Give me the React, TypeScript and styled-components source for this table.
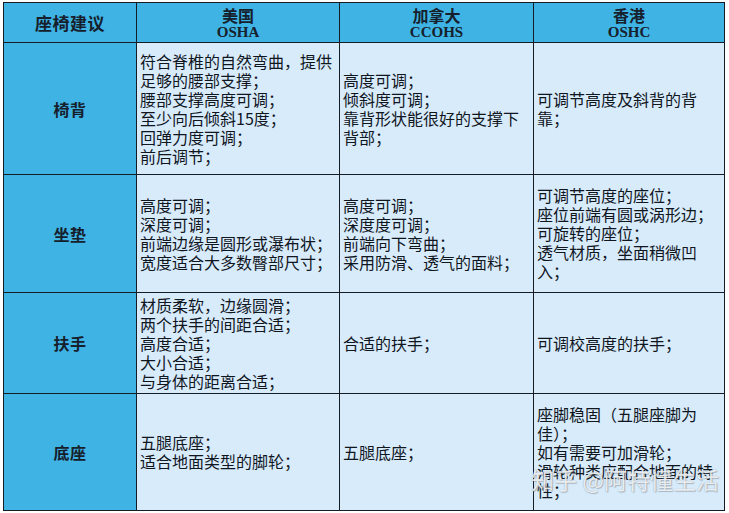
import React from 'react';
import styled, { createGlobalStyle } from 'styled-components';

const GlobalStyle = createGlobalStyle`
  html, body {
    margin: 0;
    padding: 0;
    background: #ffffff;
  }
  body {
    font-family: "Noto Sans CJK SC", "Liberation Sans", sans-serif;
  }
`;

const Page = styled.div`
  position: relative;
  width: 729px;
  height: 513px;
  padding: 2px 0 0 3px;
  box-sizing: border-box;
  overflow: hidden;
`;

const Table = styled.div`
  display: grid;
  grid-template-columns: 132px 202px 193px 190px;
  grid-template-rows: 39px 131px 117px 100px 116px;
  gap: 1px;
  padding: 1px;
  width: fit-content;
  background: #161c24;
`;

const HeadCell = styled.div`
  background: #3eb3e4;
  color: #16202c;
  display: flex;
  flex-direction: column;
  align-items: center;
  justify-content: center;
  font-weight: bold;
  font-size: 16px;
  line-height: 18px;
`;

const HeadTitle = styled.span`
  font-size: 17px;
  letter-spacing: 0.5px;
`;

const HeadCode = styled.span`
  font-family: "Liberation Serif", "Noto Sans CJK SC", serif;
  font-size: 15px;
  line-height: 16px;
`;

const RowLabel = styled.div`
  background: #3eb3e4;
  color: #16202c;
  display: flex;
  align-items: center;
  justify-content: center;
  font-weight: bold;
  font-size: 16px;
  letter-spacing: 0.5px;
`;

const Cell = styled.div`
  background: #d8ebfb;
  color: #10161e;
  display: flex;
  flex-direction: column;
  justify-content: center;
  padding-left: 3px;
  font-size: 16px;
  line-height: 19px;
  white-space: nowrap;
`;

const Line = styled.span`
  display: block;
`;

const Watermark = styled.div`
  position: absolute;
  left: 531px;
  top: 466px;
  font-size: 23px;
  line-height: 27px;
  color: rgba(255, 255, 255, 0.82);
  text-shadow: 0 0 1px rgba(90, 100, 110, 0.55), 1px 1px 1px rgba(90, 100, 110, 0.35);
  white-space: nowrap;
  pointer-events: none;
`;

const headers = [
  { name: '美国', code: 'OSHA' },
  { name: '加拿大', code: 'CCOHS' },
  { name: '香港', code: 'OSHC' },
];

const rows: { label: string; cells: string[][] }[] = [
  {
    label: '椅背',
    cells: [
      ['符合脊椎的自然弯曲，提供', '足够的腰部支撑；', '腰部支撑高度可调；', '至少向后倾斜15度；', '回弹力度可调；', '前后调节；'],
      ['高度可调；', '倾斜度可调；', '靠背形状能很好的支撑下', '背部；'],
      ['可调节高度及斜背的背', '靠；'],
    ],
  },
  {
    label: '坐垫',
    cells: [
      ['高度可调；', '深度可调；', '前端边缘是圆形或瀑布状；', '宽度适合大多数臀部尺寸；'],
      ['高度可调；', '深度度可调；', '前端向下弯曲；', '采用防滑、透气的面料；'],
      ['可调节高度的座位；', '座位前端有圆或涡形边；', '可旋转的座位；', '透气材质，坐面稍微凹', '入；'],
    ],
  },
  {
    label: '扶手',
    cells: [
      ['材质柔软，边缘圆滑；', '两个扶手的间距合适；', '高度合适；', '大小合适；', '与身体的距离合适；'],
      ['合适的扶手；'],
      ['可调校高度的扶手；'],
    ],
  },
  {
    label: '底座',
    cells: [
      ['五腿底座；', '适合地面类型的脚轮；'],
      ['五腿底座；'],
      ['座脚稳固（五腿座脚为', '佳）；', '如有需要可加滑轮；', '滑轮种类应配合地面的特', '性；'],
    ],
  },
];

const App: React.FC = () => {
  return (
    <Page>
      <GlobalStyle />
      <Table>
        <HeadCell>
          <HeadTitle>座椅建议</HeadTitle>
        </HeadCell>
        {headers.map((h) => (
          <HeadCell key={h.code}>
            <span>{h.name}</span>
            <HeadCode>{h.code}</HeadCode>
          </HeadCell>
        ))}
        {rows.map((row) => (
          <React.Fragment key={row.label}>
            <RowLabel>{row.label}</RowLabel>
            {row.cells.map((lines, i) => (
              <Cell key={i}>
                {lines.map((l, j) => (
                  <Line key={j}>{l}</Line>
                ))}
              </Cell>
            ))}
          </React.Fragment>
        ))}
      </Table>
      <Watermark>知乎 @阿特懂生活</Watermark>
    </Page>
  );
};

export default App;
